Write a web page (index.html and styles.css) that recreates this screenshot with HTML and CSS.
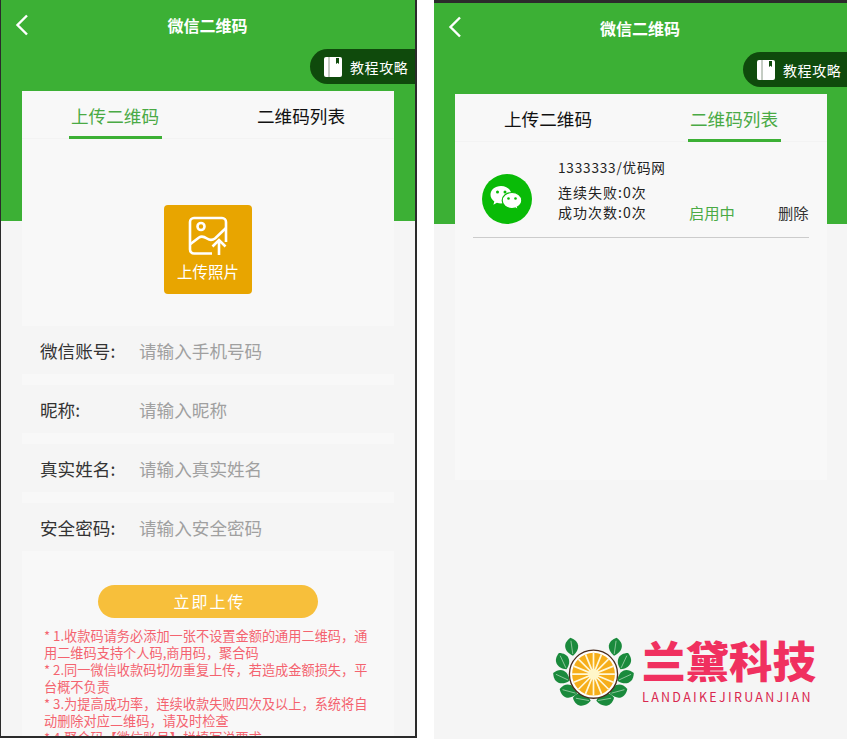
FILE: index.html
```html
<!DOCTYPE html>
<html lang="zh">
<head>
<meta charset="utf-8">
<title>微信二维码</title>
<link rel="stylesheet" href="styles.css">
</head>
<body>
<div class="stage">
  <section class="phone phone-left">
    <div class="green"></div>
    <header class="nav">
      <svg class="back" viewBox="0 0 14 22"><path d="M12 1.500 2.500 11l9.500 9.500"/></svg>
      <h1 class="title">微信二维码</h1>
    </header>
    <a class="pill">
      <svg class="book" viewBox="0 0 18 20"><path class="book-body" d="M2 0h14a2 2 0 0 1 2 2v16a2 2 0 0 1-2 2H2a2 2 0 0 1-2-2V2a2 2 0 0 1 2-2z"/><path class="book-line" d="M5 0v20"/><path class="book-mark" d="M12 1h3v6l-1.500-1.200L12 7z"/></svg>
      <span>教程攻略</span>
    </a>
    <main class="card">
      <nav class="tabs">
        <div class="tab active"><span>上传二维码</span></div>
        <div class="tab"><span>二维码列表</span></div>
      </nav>
      <div class="upload-area">
        <div class="upload">
          <svg class="upload-icon" viewBox="0 0 40 40">
            <path d="M24 37.500H6a4 4 0 0 1-4-4V6a4 4 0 0 1 4-4h28a4 4 0 0 1 4 4v20"/>
            <circle cx="13" cy="10.500" r="3.500"/>
            <path d="M2.500 28 11 21.500c3-2 5-1 8 1 3 2 5 2 8 0L38 12"/>
            <path d="M31 39V25M24.500 30.500 31 24l6.500 6.500"/>
          </svg>
          <span>上传照片</span>
        </div>
      </div>
      <div class="form">
        <div class="row"><label>微信账号:</label><span class="ph">请输入手机号码</span></div>
        <div class="row"><label>昵称:</label><span class="ph">请输入昵称</span></div>
        <div class="row"><label>真实姓名:</label><span class="ph">请输入真实姓名</span></div>
        <div class="row"><label>安全密码:</label><span class="ph">请输入安全密码</span></div>
      </div>
      <button class="submit">立即上传</button>
      <div class="notes">
        <p>* 1.收款码请务必添加一张不设置金额的通用二维码，通用二维码支持个人码,商用码，聚合码</p>
        <p>* 2.同一微信收款码切勿重复上传，若造成金额损失，平台概不负责</p>
        <p>* 3.为提高成功率，连续收款失败四次及以上，系统将自动删除对应二维码，请及时检查</p>
        <p>* 4.聚合码【微信账号】栏填写说要求</p>
      </div>
    </main>
  </section>

  <section class="phone phone-right">
    <div class="green"></div>
    <header class="nav">
      <svg class="back" viewBox="0 0 14 22"><path d="M12 1.500 2.500 11l9.500 9.500"/></svg>
      <h1 class="title">微信二维码</h1>
    </header>
    <a class="pill">
      <svg class="book" viewBox="0 0 18 20"><path class="book-body" d="M2 0h14a2 2 0 0 1 2 2v16a2 2 0 0 1-2 2H2a2 2 0 0 1-2-2V2a2 2 0 0 1 2-2z"/><path class="book-line" d="M5 0v20"/><path class="book-mark" d="M12 1h3v6l-1.500-1.200L12 7z"/></svg>
      <span>教程攻略</span>
    </a>
    <main class="card card-list">
      <nav class="tabs">
        <div class="tab"><span>上传二维码</span></div>
        <div class="tab active"><span>二维码列表</span></div>
      </nav>
      <div class="item">
        <svg class="wechat" viewBox="0 0 50 50">
          <circle cx="25" cy="25" r="25" fill="#09bb07"/>
          <path d="M19 12c-6 0-10.500 3.900-10.500 8.800 0 2.800 1.500 5.100 3.800 6.700l-.9 3.200 3.500-1.900c1.300.4 2.700.7 4.100.7 6 0 10.500-3.900 10.500-8.700S25 12 19 12z" fill="#fff"/>
          <path d="M30 18.500c-5.500 0-9.800 3.500-9.800 8s4.300 8 9.800 8c1.100 0 2.200-.2 3.200-.5l3 1.700-.8-2.800c2.700-1.500 4.400-3.800 4.400-6.400 0-4.500-4.300-8-9.800-8z" fill="#fff" stroke="#09bb07" stroke-width="1.200"/>
          <circle cx="15.500" cy="18" r="1.500" fill="#09bb07"/><circle cx="23" cy="18" r="1.500" fill="#09bb07"/>
          <circle cx="26.500" cy="24.500" r="1.300" fill="#09bb07"/><circle cx="33.500" cy="24.500" r="1.300" fill="#09bb07"/>
        </svg>
        <div class="item-info">
          <div class="item-name">1333333/优码网</div>
          <div class="item-stat">连续失败:0次</div>
          <div class="item-bottom">
            <span class="item-stat">成功次数:0次</span>
            <span class="status">启用中</span>
            <span class="del">删除</span>
          </div>
        </div>
      </div>
    </main>

    <div class="logo">
      <svg class="logo-mark" viewBox="30 30 260 224">
        <defs>
          <g id="leaf">
            <path fill="#1a8a3c" d="M0-27C27-14 25 12 0 27-25 12-27-14 0-27z"/>
            <path fill="none" stroke="#e8f5e6" stroke-width="1.500" d="M0-18V22"/>
          </g>
        </defs>
        <use href="#leaf" transform="translate(95 65) rotate(-8)"/>
        <use href="#leaf" transform="translate(68 108) rotate(-25)"/>
        <use href="#leaf" transform="translate(64 155) rotate(-65)"/>
        <use href="#leaf" transform="translate(85 198) rotate(-75)"/>
        <use href="#leaf" transform="translate(125 222) rotate(-80)"/>
        <use href="#leaf" transform="translate(225 65) rotate(8)"/>
        <use href="#leaf" transform="translate(252 108) rotate(25)"/>
        <use href="#leaf" transform="translate(256 155) rotate(65)"/>
        <use href="#leaf" transform="translate(235 198) rotate(75)"/>
        <use href="#leaf" transform="translate(195 222) rotate(80)"/>
        <circle cx="160" cy="147" r="72" fill="#fff" stroke="#4a2c1c" stroke-width="4"/>
        <circle cx="160" cy="147" r="64" fill="#f6ae1a"/>
        <g stroke="#fff8d8" stroke-width="5">
          <path d="M160 83v128M96 147h128M115 102l90 90M205 102l-90 90M136 88l48 118M184 88l-48 118M101 123l118 48M219 123l-118 48"/>
        </g>
        <circle cx="160" cy="147" r="16" fill="#fff6c8"/>
      </svg>
      <div class="logo-text">
        <div class="logo-cn">兰黛科技</div>
        <div class="logo-en">LANDAIKEJIRUANJIAN</div>
      </div>
    </div>
  </section>
</div>
</body>
</html>
```

FILE: styles.css
```css
* { box-sizing: border-box; }
html, body { margin: 0; padding: 0; background: #fff; }
body { font-family: "Noto Sans CJK SC", "Noto Sans", sans-serif; }

.stage { display: flex; gap: 17px; width: 847px; height: 739px; overflow: hidden; }

.phone { position: relative; overflow: hidden; background: #f5f5f5; flex: none; }
.phone-left { width: 417px; height: 738px; border-left: 1px solid #2b2b2b; border-right: 2px solid #2b2b2b; border-bottom: 2px solid #2b2b2b; }
.phone-right { width: 413px; height: 739px; border-top: 3px solid #2b2b2b; }

.green { position: absolute; left: 0; right: 0; top: 0; height: 221px; background: #3cb035; }

.nav { position: relative; height: 50px; display: flex; align-items: center; justify-content: center; }
.phone-right .nav { margin-top: -1px; height: 51px; }
.back { position: absolute; left: 14px; top: 14px; width: 14px; height: 22px; fill: none; stroke: #fff; stroke-width: 2.4; }
.title { margin: 0 0 0 -1px; font-size: 16px; line-height: 50px; font-weight: 700; color: #fff; }

.pill { position: absolute; right: 0; top: 49px; width: 105px; height: 35px; padding-left: 14px; display: flex; align-items: center; gap: 8px; background: #0f4a0c; border-radius: 18px 0 0 18px; color: #fff; font-size: 14px; letter-spacing: .6px; white-space: nowrap; }
.phone-right .pill { width: 104px; }
.book { width: 18px; height: 20px; flex: none; }
.book-body { fill: #fff; }
.book-line { stroke: #8a9a88; stroke-width: 1; fill: none; }
.book-mark { fill: #0f4a0c; }

.card { position: relative; margin: 41px 21px 0; background: #f8f8f8; height: 700px; }
.phone-right .card { margin: 41px 20px 0 21px; }
.card-list { height: 386px; }

.tabs { display: flex; height: 48px; border-bottom: 1px solid #f3f3f3; }
.tab { flex: 1; display: flex; justify-content: center; }
.tab span { display: block; width: 93px; height: 48px; padding-top: 12px; text-align: center; font-size: 17.6px; line-height: 26px; color: #111; }
.tab.active span { color: #4aaa45; border-bottom: 3px solid #3cb035; }

.upload-area { height: 187px; padding-top: 66px; display: flex; justify-content: center; align-items: flex-start; }
.upload { width: 88px; height: 89px; background: #e8a500; border-radius: 4px; display: flex; flex-direction: column; align-items: center; color: #fff; font-size: 15.500px; line-height: 20px; }
.upload-icon { width: 40px; height: 40px; margin-top: 11px; margin-bottom: 5px; fill: none; stroke: #fff; stroke-width: 2.600; }

.form { display: flex; flex-direction: column; gap: 11px; }
.row { height: 48px; background: #f5f5f5; display: flex; align-items: center; padding-left: 18px; font-size: 17.600px; }
.row label { width: 99px; color: #333; }
.ph { color: #a0a0a0; }

.submit { display: block; margin: 34px 0 0 76px; width: 220px; height: 33px; border: 0; border-radius: 17px; background: #f7bf3b; color: #fff; font-family: inherit; font-size: 16px; letter-spacing: 2px; line-height: 33px; padding: 0 0 0 3px; }

.notes { margin: 9px 0 0 22px; width: 330px; color: #f4636f; font-size: 13.200px; line-height: 17px; }
.notes p { margin: 0; }

.item { display: flex; align-items: flex-start; margin: 0 18px; height: 96px; border-bottom: 1px solid #ccc; padding: 0 0 0 9px; position: relative; }
.wechat { width: 50px; height: 50px; flex: none; margin-top: 32px; }
.item-info { margin-left: 26px; flex: 1; padding-top: 15px; color: #222; font-size: 14px; line-height: 20px; }
.item-name { letter-spacing: .8px; font-size: 13.600px; margin-bottom: 5px; }
.item-stat { letter-spacing: 1px; }
.item-bottom { display: flex; align-items: center; }
.item-bottom .item-stat { width: 131px; }
.status { width: 89px; color: #4aaa45; font-size: 15.300px; }
.del { color: #333; font-size: 15.300px; }

.logo { position: absolute; left: 116px; top: 632px; display: flex; align-items: flex-start; gap: 5px; }
.logo-mark { width: 87px; height: 75px; flex: none; }
.logo-cn { padding-top: 3px; font-size: 43.500px; line-height: 44px; font-weight: 900; color: #f0305f; white-space: nowrap; }
.logo-en { margin-top: 8px; font-size: 12.500px; line-height: 14px; letter-spacing: 2.300px; color: #d9274f; white-space: nowrap; }
```
